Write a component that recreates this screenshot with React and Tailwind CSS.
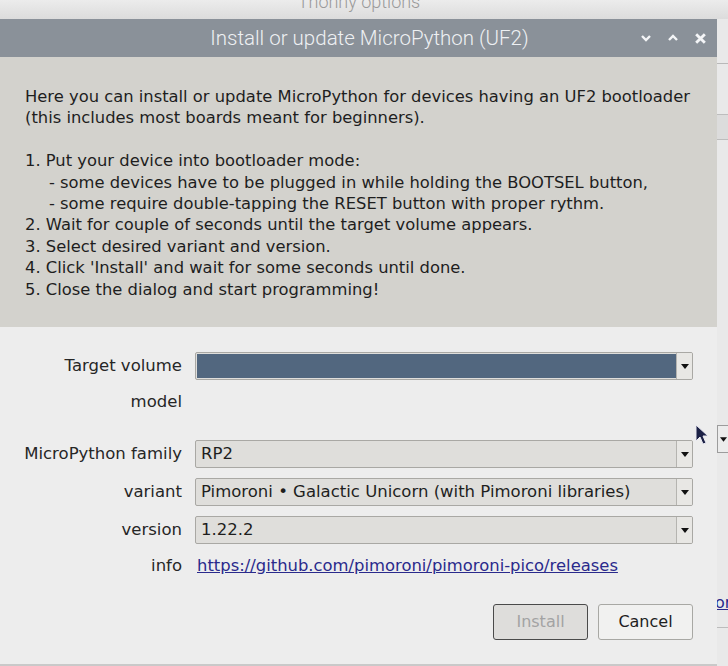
import React from "react";

const dv = { fontFamily: '"DejaVu Sans", "Liberation Sans", sans-serif' };

function Combo({ children, selected }) {
  return (
    <div className="flex h-[28px] w-[498px] flex-none rounded-[2px] border border-[#a9a8a4] bg-[#dfdedb] overflow-hidden">
      <div className={"flex-1 flex items-center pl-[5px] text-[16.5px] text-[#1e1e1e] whitespace-nowrap " + (selected ? "bg-[#52677f] m-[1px] mr-0" : "")} style={dv}>
        {children}
      </div>
      <div className="w-[16px] border-l border-[#b5b4b0] bg-[#e8e7e4] flex items-center justify-center">
        <svg width="8" height="5" viewBox="0 0 8 5"><path d="M0 0 L8 0 L4 5 Z" fill="#111" /></svg>
      </div>
    </div>
  );
}

function Label({ children }) {
  return (
    <div className="w-[183px] flex-none pr-[1px] text-right text-[16.5px] text-[#262626] whitespace-nowrap" style={dv}>
      {children}
    </div>
  );
}

export default function App() {
  return (
    <div className="w-[728px] h-[666px] overflow-hidden bg-[#e8e8e8] flex flex-col relative">
      {/* background window top */}
      <div className="h-[19px] flex-none relative bg-gradient-to-b from-[#ececec] to-[#dcdcdc] overflow-hidden">
        <div className="absolute left-0 right-[10px] top-[-12px] text-center text-[18px] text-[#9a9a9a]" style={{ fontFamily: "Roboto, sans-serif", fontWeight: 300 }}>
          Thonny options
        </div>
      </div>
      <div className="flex flex-1 min-h-0">
        {/* dialog */}
        <div className="w-[717px] flex-none flex flex-col shadow-[0_0_6px_rgba(0,0,0,0.25)]">
          <div className="h-[38px] flex-none bg-[#8a9199] flex items-center relative">
            <div className="flex-1 text-center pl-[22px] text-[20.5px] text-[#eef0f3]" style={{ fontFamily: "Roboto, sans-serif", fontWeight: 300 }}>
              Install or update MicroPython (UF2)
            </div>
            <div className="absolute right-[10px] top-0 h-full flex items-center gap-[15px]">
              <svg width="12" height="12" viewBox="0 0 12 12"><path d="M2 4 L6 8 L10 4" stroke="#f4f5f7" strokeWidth="2.4" fill="none" /></svg>
              <svg width="12" height="12" viewBox="0 0 12 12"><path d="M2 8 L6 4 L10 8" stroke="#f4f5f7" strokeWidth="2.4" fill="none" /></svg>
              <svg width="13" height="13" viewBox="0 0 12 12"><path d="M2 2 L10 10 M10 2 L2 10" stroke="#f4f5f7" strokeWidth="2.6" fill="none" /></svg>
            </div>
          </div>
          <div className="h-[270px] flex-none bg-[#d3d2cd] pt-[29px] pl-[25px] text-[16.35px] leading-[21.4px] text-[#1e1e1e] whitespace-nowrap" style={dv}>
            <div>Here you can install or update MicroPython for devices having an UF2 bootloader</div>
            <div>(this includes most boards meant for beginners).</div>
            <div>&nbsp;</div>
            <div>1. Put your device into bootloader mode:</div>
            <div className="pl-[24px]">- some devices have to be plugged in while holding the BOOTSEL button,</div>
            <div className="pl-[24px]">- some require double-tapping the RESET button with proper rythm.</div>
            <div>2. Wait for couple of seconds until the target volume appears.</div>
            <div>3. Select desired variant and version.</div>
            <div>4. Click 'Install' and wait for some seconds until done.</div>
            <div>5. Close the dialog and start programming!</div>
          </div>
          <div className="flex-1 bg-[#ededed] pt-[25px] flex flex-col">
            <div className="flex items-center gap-[12px]">
              <Label>Target volume</Label>
              <Combo selected>{""}</Combo>
            </div>
            <div className="flex items-center gap-[12px] mt-[10px] h-[24px]">
              <Label>model</Label>
            </div>
            <div className="flex items-center gap-[12px] mt-[26px]">
              <Label>MicroPython family</Label>
              <Combo>RP2</Combo>
            </div>
            <div className="flex items-center gap-[12px] mt-[10px]">
              <Label>variant</Label>
              <Combo>Pimoroni • Galactic Unicorn (with Pimoroni libraries)</Combo>
            </div>
            <div className="flex items-center gap-[12px] mt-[10px]">
              <Label>version</Label>
              <Combo>1.22.2</Combo>
            </div>
            <div className="flex items-center gap-[14px] mt-[10px] h-[24px]">
              <Label>info</Label>
              <span className="text-[16.4px] text-[#2a2a8c] underline whitespace-nowrap" style={dv}>https://github.com/pimoroni/pimoroni-pico/releases</span>
            </div>
            <div className="flex justify-end gap-[10px] mt-[26px] pr-[24px]">
              <div className="w-[95px] h-[36px] rounded-[3px] border border-[#4a4a4a] bg-[#dedddb] flex items-center justify-center text-[16px] text-[#a3a3a3]" style={dv}>
                Install
              </div>
              <div className="w-[95px] h-[36px] rounded-[3px] border border-[#a8a8a4] bg-[#f1f1f0] flex items-center justify-center text-[16px] text-[#1e1e1e]" style={dv}>
                Cancel
              </div>
            </div>
          </div>
          <div className="h-[2px] flex-none bg-[#c9c9c9]" />
        </div>
        {/* background window right strip */}
        <div className="flex-1 min-w-0 overflow-hidden flex flex-col bg-[#e9e9e9] relative">
          <div className="h-[44px] flex-none" />
          <div className="h-[1px] flex-none bg-[#b9b9b9]" />
          <div className="h-[50px] flex-none" />
          <div className="h-[26px] flex-none border-y border-[#bdbdbd] bg-[#dcdcdc]" />
          <div className="h-[285px] flex-none" />
          <div className="h-[28px] flex-none border border-r-0 border-[#9c9c9c] bg-[#ececec] flex items-center pl-[2px]">
            <svg width="7" height="5" viewBox="0 0 8 5"><path d="M0 0 L8 0 L4 5 Z" fill="#111" /></svg>
          </div>
          <div className="h-[140px] flex-none" />
          <div className="text-[16px] leading-[20px] text-[#2a2a8c] underline -ml-[2px] whitespace-nowrap" style={dv}>or</div>
          <div className="h-[14px] flex-none" />
          <div className="h-[1px] flex-none bg-[#bcbcbc]" />
        </div>
      </div>
      {/* mouse pointer */}
      <svg className="absolute left-[695px] top-[424px]" width="14" height="22" viewBox="0 0 14 22">
        <path d="M1 1 L1 17 L5 13 L8 20 L11 19 L8 12 L13 12 Z" fill="#1c2146" stroke="#e8e8f0" strokeWidth="1" />
      </svg>
    </div>
  );
}
